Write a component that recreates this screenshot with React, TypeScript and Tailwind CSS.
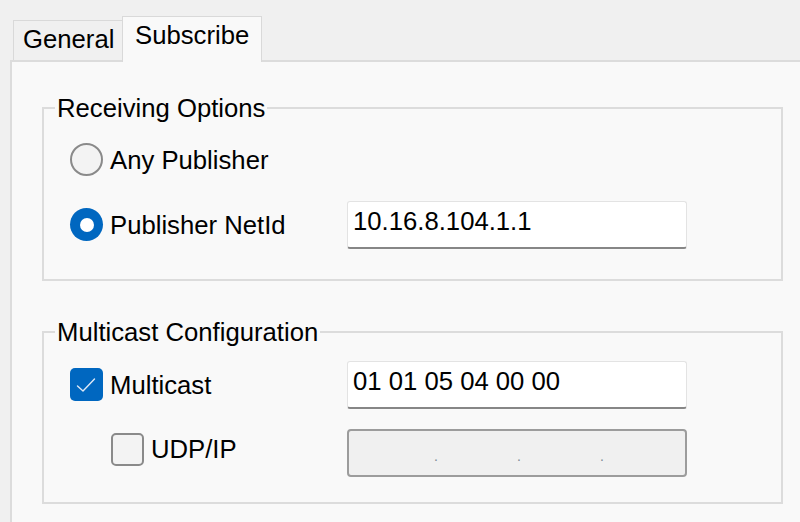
import React from "react";

function Radio({ checked }: { checked?: boolean }) {
  if (checked) {
    return (
      <div className="w-[33px] h-[33px] rounded-full bg-[#0067c0] flex items-center justify-center shrink-0">
        <div className="w-[14px] h-[14px] rounded-full bg-white" />
      </div>
    );
  }
  return <div className="w-[33px] h-[33px] rounded-full border-2 border-[#8a8a8a] bg-[#f3f3f3] shrink-0" />;
}

function Checkbox({ checked }: { checked?: boolean }) {
  if (checked) {
    return (
      <div className="w-[33px] h-[33px] rounded-[5px] bg-[#0067c0] shrink-0">
        <svg width="33" height="33" viewBox="0 0 33 33">
          <path d="M7.5 18 L13 23 L24.5 11" fill="none" stroke="#dfe9f6" strokeWidth="1.4" strokeLinecap="round" strokeLinejoin="round" />
        </svg>
      </div>
    );
  }
  return <div className="w-[33px] h-[33px] rounded-[5px] border-2 border-[#8a8a8a] bg-[#f3f3f3] shrink-0" />;
}

function TextBox({ value }: { value: string }) {
  return (
    <div className="w-[340px] h-[48px] bg-white border border-[#e3e3e3] border-b-2 border-b-[#868686] rounded-[3px] flex items-center pl-[5px] pb-[6px] shrink-0">
      {value}
    </div>
  );
}

function IpBox() {
  return (
    <div className="w-[340px] h-[48px] bg-[#f0f0f0] border-2 border-[#9c9c9c] rounded-[4px] flex items-center shrink-0 text-[14px] text-[#7f8a96]">
      <div className="w-[85px]" />
      <span className="w-[2px] mt-[6px] leading-none">.</span>
      <div className="w-[81px]" />
      <span className="w-[2px] mt-[6px] leading-none">.</span>
      <div className="w-[81px]" />
      <span className="w-[2px] mt-[6px] leading-none">.</span>
    </div>
  );
}

export default function App() {
  return (
    <div className="w-[800px] h-[522px] overflow-hidden bg-[#f0f0f0] font-['Liberation_Sans',Arial,sans-serif] text-[25.7px] text-black flex flex-col">
      <div className="h-[60px] flex items-end pl-[13px] shrink-0">
        <div className="w-[109px] h-[40px] border-t border-l border-[#d9d9d9] bg-[#f0f0f0] flex items-center pl-[9px] pb-[1px] leading-none">
          General
        </div>
        <div className="relative z-10 -mb-[2px] w-[140px] h-[46px] border-t border-l border-r border-[#d9d9d9] bg-[#f9f9f9] flex items-center pl-[12px] pb-[7px] leading-none">
          Subscribe
        </div>
      </div>
      <div className="flex-1 ml-[10px] border-t-2 border-l-2 border-[#dcdcdc] bg-[#f9f9f9] pt-[31px] pl-[30px] pr-[17px]">
        <fieldset className="border-2 border-[#dcdcdc]">
          <legend className="ml-[11px] px-[2px] leading-[30px]">Receiving Options</legend>
          <div className="pl-[26px] pt-[13px] pb-[30px] flex flex-col gap-[17px]">
            <div className="h-[48px] flex items-center">
              <div className="w-[277px] flex items-center gap-[7px]">
                <Radio />
                <span>Any Publisher</span>
              </div>
            </div>
            <div className="h-[48px] flex items-center">
              <div className="w-[277px] flex items-center gap-[7px]">
                <Radio checked />
                <span>Publisher NetId</span>
              </div>
              <TextBox value="10.16.8.104.1.1" />
            </div>
          </div>
        </fieldset>
        <fieldset className="border-2 border-[#dcdcdc] mt-[36px]">
          <legend className="ml-[11px] px-[2px] leading-[30px]">Multicast Configuration</legend>
          <div className="pl-[26px] pt-[14px] pb-[25px] flex flex-col gap-[20px]">
            <div className="h-[48px] flex items-center">
              <div className="w-[277px] flex items-center gap-[7px]">
                <Checkbox checked />
                <span>Multicast</span>
              </div>
              <TextBox value="01 01 05 04 00 00" />
            </div>
            <div className="h-[48px] flex items-center">
              <div className="w-[277px] flex items-center gap-[7px] pl-[41px] mb-[7px]">
                <Checkbox />
                <span>UDP/IP</span>
              </div>
              <IpBox />
            </div>
          </div>
        </fieldset>
      </div>
    </div>
  );
}
